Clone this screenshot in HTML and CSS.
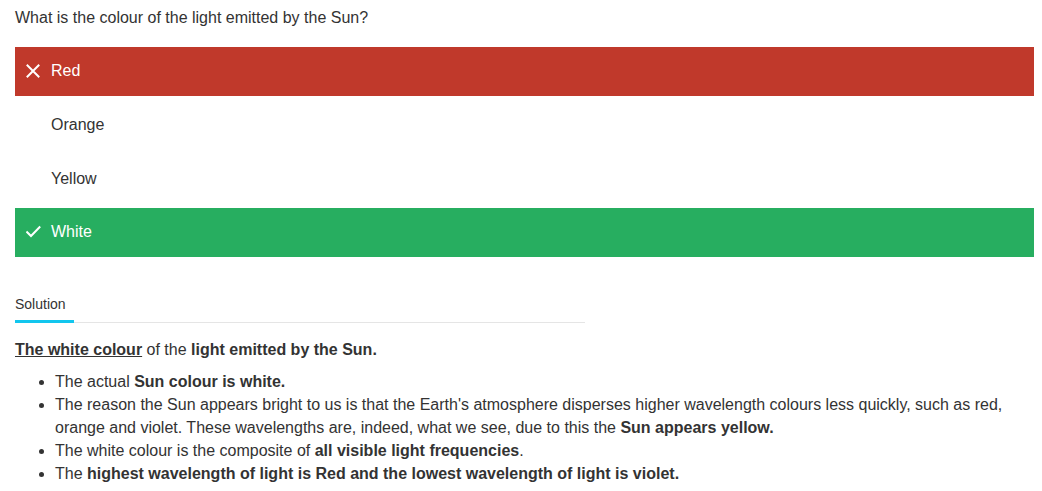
FILE: index.html
```html
<!DOCTYPE html>
<html>
<head>
<meta charset="utf-8">
<link rel="stylesheet" href="styles.css">
</head>
<body>
<div class="quiz">
  <p class="question">What is the colour of the light emitted by the Sun?</p>
  <div class="options">
    <div class="option wrong">
      <span class="icon"><svg width="14" height="14" viewBox="0 0 14 14"><path d="M1.5 1.5 L12.5 12.5 M12.5 1.5 L1.5 12.5" stroke="#fff" stroke-width="2" fill="none" stroke-linecap="square"/></svg></span>
      <span class="label">Red</span>
    </div>
    <div class="option">
      <span class="icon"></span>
      <span class="label">Orange</span>
    </div>
    <div class="option">
      <span class="icon"></span>
      <span class="label">Yellow</span>
    </div>
    <div class="option correct">
      <span class="icon"><svg width="15" height="14" viewBox="0 0 15 14"><path d="M1.2 7.2 L5 11 L13.5 2.2" stroke="#fff" stroke-width="2" fill="none" stroke-linecap="square"/></svg></span>
      <span class="label">White</span>
    </div>
  </div>
  <div class="tabs">
    <span class="tab">Solution</span>
  </div>
  <div class="solution">
    <p><b><u>The white colour</u></b> of the <b>light emitted by the Sun.</b></p>
    <ul>
      <li>The actual <b>Sun colour is white.</b></li>
      <li>The reason the Sun appears bright to us is that the Earth's atmosphere disperses higher wavelength colours less quickly, such as red, orange and violet. These wavelengths are, indeed, what we see, due to this the <b>Sun appears yellow.</b></li>
      <li>The white colour is the composite of <b>all visible light frequencies</b>.</li>
      <li>The <b>highest wavelength of light is Red and the lowest wavelength of light is violet.</b></li>
    </ul>
  </div>
</div>
</body>
</html>
```

FILE: styles.css
```css
html, body {
  margin: 0;
  padding: 0;
  background: #fff;
}
body {
  font-family: "Liberation Sans", Arial, sans-serif;
  font-size: 16px;
  line-height: 1.42857;
  color: #333;
}
.quiz {
  padding: 7px 8px 0 15px;
}
.question {
  margin: 0 0 17px;
}
.options {
  display: flex;
  flex-direction: column;
  gap: 4.67px;
}
.option {
  height: 49px;
  display: flex;
  align-items: center;
  color: #333;
}
.option.wrong {
  background: #c0392b;
  color: #fff;
}
.option.correct {
  background: #27ae60;
  color: #fff;
}
.option .icon {
  width: 36px;
  display: flex;
  align-items: center;
  padding-left: 11px;
  box-sizing: border-box;
  height: 14px;
}
.option .label {
  line-height: 22px;
}
.tabs {
  margin-top: 37px;
  width: 570px;
  border-bottom: 1px solid #e5e5e5;
  display: flex;
}
.tab {
  font-size: 14px;
  line-height: 20px;
  padding: 0 8px 6px 0;
  border-bottom: 3px solid #12c6ee;
  margin-bottom: -1px;
}
.solution {
  margin-top: 16px;
}
.solution p {
  margin: 0 0 9.5px;
}
.solution ul {
  margin: 0;
  padding-left: 40px;
}
```
